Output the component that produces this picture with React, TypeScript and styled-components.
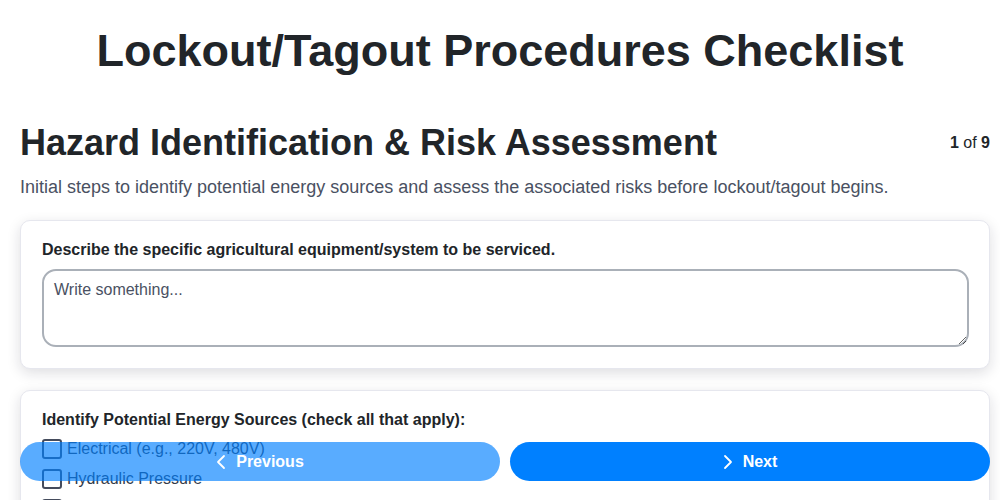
import React from "react";
import styled, { createGlobalStyle } from "styled-components";

const Global = createGlobalStyle`
  html, body { margin: 0; padding: 0; background: #fff; }
  body { font-family: "Liberation Sans", Arial, sans-serif; color: #222; }
  * { box-sizing: border-box; }
`;

const Page = styled.div`
  padding: 0 10px 100px 20px;
`;

const Title = styled.h1`
  margin: 0 -10px 0 -20px;
  padding-top: 26px;
  text-align: center;
  font-size: 45px;
  line-height: 50px;
  font-weight: 700;
  color: #212529;
`;

const SectionHeader = styled.div`
  display: flex;
  align-items: flex-start;
  justify-content: space-between;
  margin-top: 45px;
`;

const SectionTitle = styled.h2`
  margin: 0;
  font-size: 36px;
  line-height: 44px;
  font-weight: 700;
  color: #212529;
`;

const Counter = styled.div`
  font-size: 16px;
  line-height: 18px;
  margin-top: 13px;
  color: #212529;
  b { font-weight: 700; }
`;

const Description = styled.p`
  margin: 11px 0 0 0;
  font-size: 18px;
  line-height: 22px;
  color: #4a5162;
`;

const Card = styled.div<{ $mt: number }>`
  margin-top: ${(p) => p.$mt}px;
  background: #fff;
  border: 1px solid #e6e7ee;
  border-radius: 10px;
  box-shadow: 0 4px 14px rgba(20, 20, 40, 0.14);
  padding: 19px 20px 21px 21px;
`;

const Label = styled.div`
  font-size: 16px;
  line-height: 19px;
  font-weight: 700;
  color: #212529;
  margin-bottom: 10px;
`;

const TextArea = styled.textarea`
  display: block;
  width: 100%;
  height: 78px;
  border: 2px solid #aab0b8;
  border-radius: 14px;
  padding: 10px 10px;
  font-family: "Liberation Sans", Arial, sans-serif;
  font-size: 16px;
  color: #333;
  resize: vertical;
  outline: none;
  &::placeholder { color: #4a5162; }
`;

const CheckList = styled.div`
  display: flex;
  flex-direction: column;
  gap: 10px;
`;

const CheckRow = styled.label`
  display: flex;
  align-items: center;
  gap: 5px;
  height: 20px;
  font-size: 16px;
  color: #333a48;
`;

const Box = styled.span`
  width: 20px;
  height: 20px;
  border: 2px solid #444b5c;
  border-radius: 3px;
  flex: none;
`;

const Footer = styled.div`
  position: fixed;
  left: 20px;
  right: 10px;
  bottom: 19px;
  display: grid;
  grid-template-columns: 1fr 1fr;
  gap: 10px;
`;

const NavButton = styled.button<{ $disabled?: boolean }>`
  height: 39px;
  border: none;
  border-radius: 20px;
  background: #0080ff;
  color: #fff;
  font-family: "Liberation Sans", Arial, sans-serif;
  font-size: 16px;
  font-weight: 700;
  display: flex;
  align-items: center;
  justify-content: center;
  gap: 10px;
  opacity: ${(p) => (p.$disabled ? 0.65 : 1)};
  cursor: pointer;
`;

const Chevron = ({ dir }: { dir: "left" | "right" }) => (
  <svg width="10" height="16" viewBox="0 0 10 16" fill="none" stroke="#fff" strokeWidth="1.8" strokeLinecap="round" strokeLinejoin="round">
    {dir === "left" ? <path d="M8 2L2 8l6 6" /> : <path d="M2 2l6 6-6 6" />}
  </svg>
);

const sources = ["Electrical (e.g., 220V, 480V)", "Hydraulic Pressure", "Pneumatic Pressure"];

export default function App() {
  return (
    <>
      <Global />
      <Page>
        <Title>Lockout/Tagout Procedures Checklist</Title>
        <SectionHeader>
          <SectionTitle>Hazard Identification &amp; Risk Assessment</SectionTitle>
          <Counter><b>1</b> of <b>9</b></Counter>
        </SectionHeader>
        <Description>
          Initial steps to identify potential energy sources and assess the associated risks before lockout/tagout begins.
        </Description>
        <Card $mt={22}>
          <Label>Describe the specific agricultural equipment/system to be serviced.</Label>
          <TextArea placeholder="Write something..." />
        </Card>
        <Card $mt={21}>
          <Label>Identify Potential Energy Sources (check all that apply):</Label>
          <CheckList>
            {sources.map((s) => (
              <CheckRow key={s}>
                <Box />
                {s}
              </CheckRow>
            ))}
          </CheckList>
        </Card>
      </Page>
      <Footer>
        <NavButton $disabled>
          <Chevron dir="left" />
          Previous
        </NavButton>
        <NavButton>
          <Chevron dir="right" />
          Next
        </NavButton>
      </Footer>
    </>
  );
}
